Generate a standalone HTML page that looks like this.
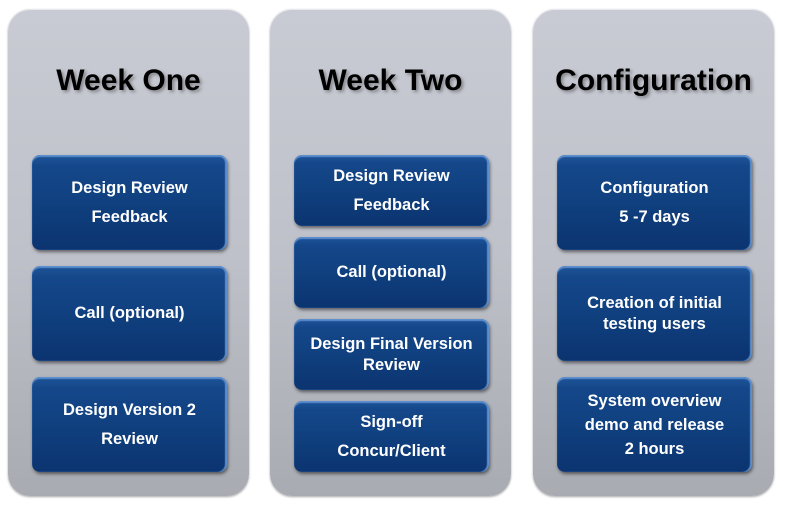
<!DOCTYPE html><html><head><style>
body{margin:0;width:790px;height:521px;background:#fff;position:relative;font-family:"Liberation Sans",sans-serif;overflow:hidden}
.p{position:absolute;top:9px;width:241px;height:487px;border-radius:22px;background:linear-gradient(#c9cbd4,#bfc1ca 50%,#a9abb2);box-shadow:0 1px 2px rgba(0,0,0,.35),inset 0 1px 0 #e8e9ee}
.t{position:absolute;top:55px;width:100%;text-align:center;font-weight:bold;font-size:30px;letter-spacing:0;color:#000;text-shadow:2px 2px 3px rgba(0,0,0,.35)}
.b{position:absolute;left:24px;width:195px;border-radius:8px;background:linear-gradient(#1f5599 0%,#14478a 12%,#10407f 50%,#0b3470);box-shadow:1px 2px 3px rgba(0,0,0,.5),inset 0 2px 1px #5d8fcf,inset -2px 0 1px #5f90cc;color:#fff;font-weight:bold;font-size:16.5px;display:flex;align-items:center;justify-content:center;text-align:center;line-height:21px}
</style></head><body>
<div class="p" style="left:8px"><div class="t">Week One</div>
<div class="b" style="top:146px;height:95px;line-height:29px">Design Review<br>Feedback</div>
<div class="b" style="top:257px;height:95px">Call (optional)</div>
<div class="b" style="top:368px;height:95px;line-height:29px">Design Version 2<br>Review</div></div>
<div class="p" style="left:270px"><div class="t">Week Two</div>
<div class="b" style="top:146px;height:71px;line-height:29px">Design Review<br>Feedback</div>
<div class="b" style="top:228px;height:71px">Call (optional)</div>
<div class="b" style="top:310px;height:71px">Design Final Version<br>Review</div>
<div class="b" style="top:392px;height:71px;line-height:29px">Sign-off<br>Concur/Client</div></div>
<div class="p" style="left:533px"><div class="t">Configuration</div>
<div class="b" style="top:146px;height:95px;line-height:29px">Configuration<br>5 -7 days</div>
<div class="b" style="top:257px;height:95px">Creation of initial<br>testing users</div>
<div class="b" style="top:368px;height:95px;line-height:24px">System overview<br>demo and release<br>2 hours</div></div>
</body></html>
